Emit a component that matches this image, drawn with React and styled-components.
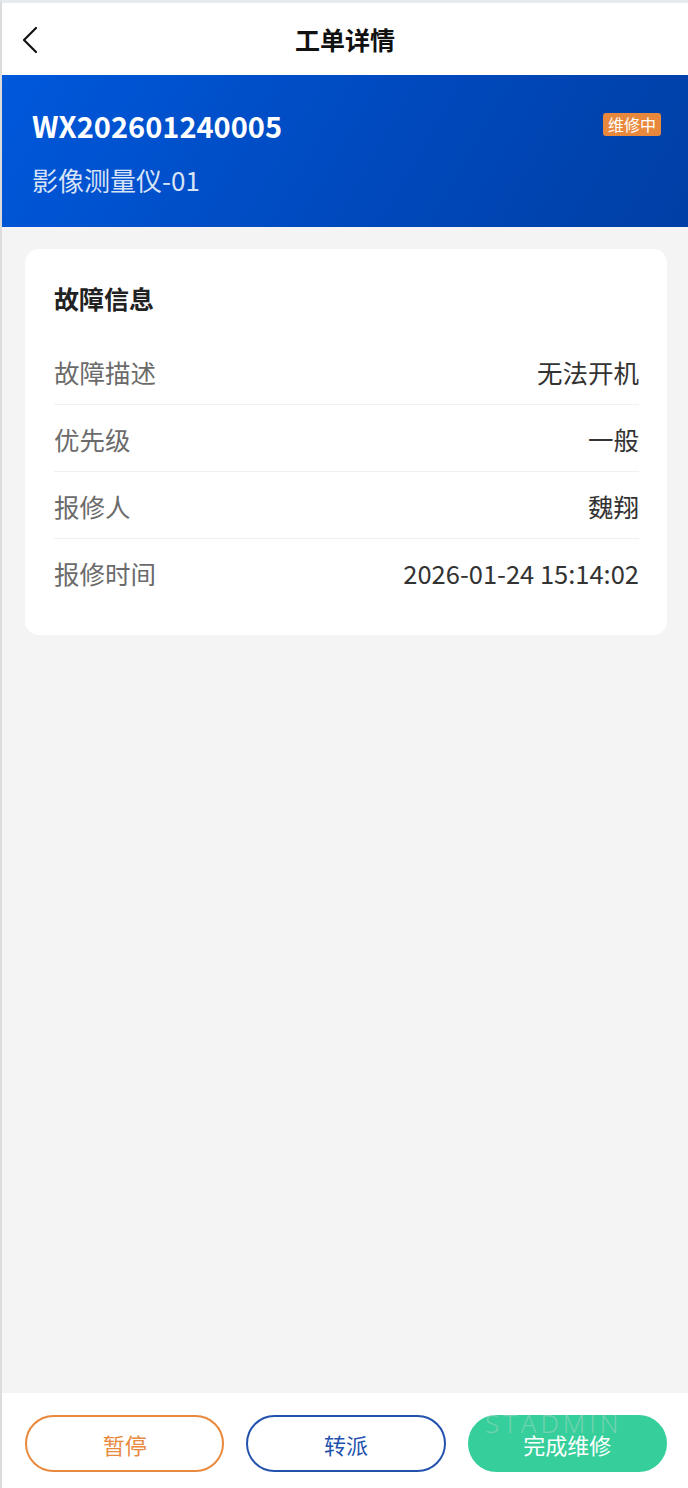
import React from 'react';
import styled, { createGlobalStyle } from 'styled-components';

const GlobalStyle = createGlobalStyle`
  * { box-sizing: border-box; }
  html, body { margin: 0; padding: 0; }
  body {
    font-family: "Noto Sans CJK SC", "Noto Sans", sans-serif;
    background: #f4f4f4;
  }
`;

const Page = styled.div`
  min-height: 100vh;
  display: flex;
  flex-direction: column;
  border-top: 3px solid #e7eaee;
  border-left: 2px solid #dcdcdc;
  background: #f4f4f4;
`;

const Header = styled.header`
  height: 72px;
  background: #fff;
  display: flex;
  align-items: center;
  justify-content: center;
  position: relative;
`;

const BackButton = styled.button`
  position: absolute;
  left: 14px;
  top: 22px;
  width: 28px;
  height: 30px;
  padding: 0;
  border: none;
  background: none;
  display: flex;
  align-items: center;
  justify-content: center;
`;

const Title = styled.h1`
  margin: 0;
  font-size: 25px;
  font-weight: 700;
  color: #111;
`;

const Banner = styled.section`
  background: linear-gradient(120deg, #0058db 0%, #0049bd 55%, #003fa5 100%);
  padding: 28px 27px 30px 30px;
  display: flex;
  justify-content: space-between;
  align-items: flex-start;
`;

const OrderNo = styled.div`
  font-size: 29px;
  line-height: 44px;
  font-weight: 700;
  color: #fff;
`;

const DeviceName = styled.div`
  margin-top: 16px;
  font-size: 26px;
  line-height: 34px;
  color: rgba(255, 255, 255, 0.85);
`;

const Badge = styled.span`
  margin-top: 10px;
  padding: 0 5px;
  height: 23px;
  line-height: 23px;
  font-size: 16px;
  color: #fff;
  background: #e8883c;
  border-radius: 3px;
`;

const Content = styled.main`
  flex: 1;
  padding: 22px 21px 22px 23px;
`;

const Card = styled.section`
  background: #fff;
  border-radius: 14px;
  padding: 28px 28px 29px 29px;
`;

const CardTitle = styled.h2`
  margin: 0 0 19px;
  font-size: 25px;
  line-height: 42px;
  font-weight: 700;
  color: #222;
`;

const Row = styled.div`
  height: 67px;
  display: flex;
  align-items: center;
  justify-content: space-between;
  font-size: 25.5px;
  border-bottom: ${(p) => (p.$last ? 'none' : '1px solid #f0f0f0')};
`;

const Label = styled.span`
  color: #6b6b6b;
`;

const Value = styled.span`
  color: #333;
`;

const Footer = styled.footer`
  position: relative;
  background: #fff;
  padding: 22px 21px 16px 23px;
  display: flex;
  gap: 22px;
`;

const ActionButton = styled.button`
  flex: 1;
  height: 57px;
  border-radius: 29px;
  font-family: inherit;
  font-size: 22px;
  border: 2px solid ${(p) => p.$color};
  color: ${(p) => (p.$filled ? '#fff' : p.$color)};
  background: ${(p) => (p.$filled ? p.$color : '#fff')};
`;

const Watermark = styled.span`
  position: absolute;
  left: 483px;
  top: 21px;
  font-family: "Open Sans", sans-serif;
  font-size: 26px;
  line-height: 0.75;
  font-weight: 300;
  letter-spacing: 4px;
  color: rgba(215, 215, 215, 0.4);
  pointer-events: none;
`;

const rows = [
  ['故障描述', '无法开机'],
  ['优先级', '一般'],
  ['报修人', '魏翔'],
  ['报修时间', '2026-01-24 15:14:02'],
];

const App = () => {
  return (
    <Page>
      <GlobalStyle />
      <Header>
        <BackButton aria-label="返回">
          <svg width="18" height="28" viewBox="0 0 18 28" fill="none">
            <path d="M15 2 L3 14 L15 26" stroke="#111" strokeWidth="2.2" strokeLinecap="round" strokeLinejoin="round" />
          </svg>
        </BackButton>
        <Title>工单详情</Title>
      </Header>

      <Banner>
        <div>
          <OrderNo>WX202601240005</OrderNo>
          <DeviceName>影像测量仪-01</DeviceName>
        </div>
        <Badge>维修中</Badge>
      </Banner>

      <Content>
        <Card>
          <CardTitle>故障信息</CardTitle>
          {rows.map(([label, value], i) => (
            <Row key={label} $last={i === rows.length - 1}>
              <Label>{label}</Label>
              <Value>{value}</Value>
            </Row>
          ))}
        </Card>
      </Content>

      <Footer>
        <ActionButton $color="#e8893e">暂停</ActionButton>
        <ActionButton $color="#2352ad">转派</ActionButton>
        <ActionButton $color="#36cf9b" $filled>完成维修</ActionButton>
        <Watermark>STADMIN</Watermark>
      </Footer>
    </Page>
  );
};

export default App;
